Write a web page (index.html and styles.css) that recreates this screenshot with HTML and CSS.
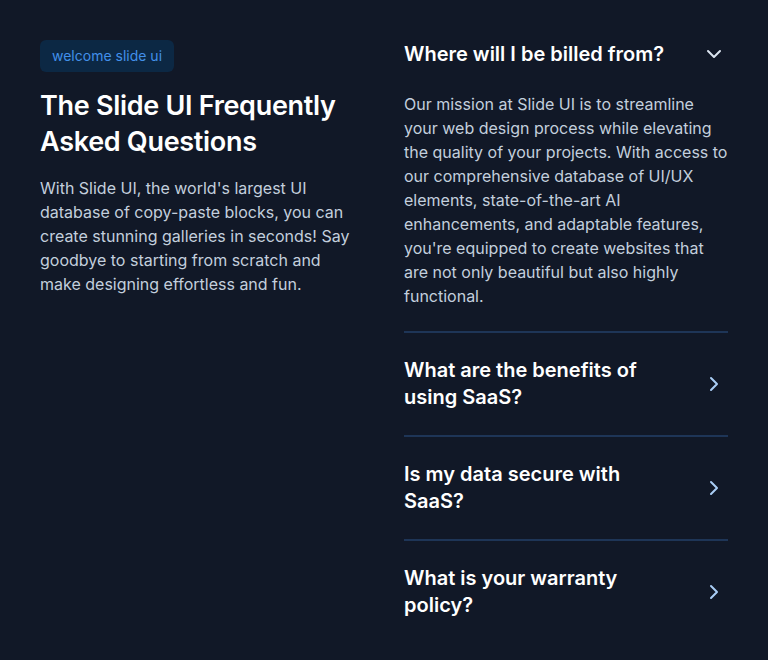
FILE: index.html
```html
<!DOCTYPE html>
<html lang="en">
<head>
<meta charset="utf-8">
<link rel="stylesheet" href="styles.css">
</head>
<body>
<section class="faq">
  <div class="intro">
    <span class="badge">welcome slide ui</span>
    <h1 class="title">The Slide UI Frequently Asked Questions</h1>
    <p class="lead">With Slide UI, the world's largest UI database of copy-paste blocks, you can create stunning galleries in seconds! Say goodbye to starting from scratch and make designing effortless and fun.</p>
  </div>
  <div class="list">
    <div class="item open">
      <div class="q">
        <span class="q-text">Where will I be billed from?</span>
        <svg class="icon icon-down" viewBox="0 0 24 24" width="24" height="24"><path d="M6 9l6 6 6-6" fill="none" stroke="currentColor" stroke-width="2" stroke-linecap="round" stroke-linejoin="round"/></svg>
      </div>
      <p class="a">Our mission at Slide UI is to streamline your web design process while elevating the quality of your projects. With access to our comprehensive database of UI/UX elements, state-of-the-art AI enhancements, and adaptable features, you're equipped to create websites that are not only beautiful but also highly functional.</p>
    </div>
    <div class="item">
      <div class="q">
        <span class="q-text">What are the benefits of using SaaS?</span>
        <svg class="icon icon-right" viewBox="0 0 24 24" width="24" height="24"><path d="M9 6l6 6-6 6" fill="none" stroke="currentColor" stroke-width="2" stroke-linecap="round" stroke-linejoin="round"/></svg>
      </div>
    </div>
    <div class="item">
      <div class="q">
        <span class="q-text">Is my data secure with SaaS?</span>
        <svg class="icon icon-right" viewBox="0 0 24 24" width="24" height="24"><path d="M9 6l6 6-6 6" fill="none" stroke="currentColor" stroke-width="2" stroke-linecap="round" stroke-linejoin="round"/></svg>
      </div>
    </div>
    <div class="item last">
      <div class="q">
        <span class="q-text">What is your warranty policy?</span>
        <svg class="icon icon-right" viewBox="0 0 24 24" width="24" height="24"><path d="M9 6l6 6-6 6" fill="none" stroke="currentColor" stroke-width="2" stroke-linecap="round" stroke-linejoin="round"/></svg>
      </div>
    </div>
  </div>
</section>
</body>
</html>
```

FILE: styles.css
```css
* { box-sizing: border-box; }
html, body { margin: 0; padding: 0; }
body {
  background: #111827;
  font-family: Inter, "Noto Sans", sans-serif;
  color: #cbd5e1;
  width: 768px;
  height: 660px;
  overflow: hidden;
}
.faq {
  display: grid;
  grid-template-columns: 1fr 1fr;
  gap: 40px;
  padding: 40px;
}
.intro { display: flex; flex-direction: column; align-items: flex-start; }
.badge {
  display: inline-block;
  height: 32px;
  line-height: 32px;
  padding: 0 12px;
  border-radius: 6px;
  background: #0c2844;
  color: #4290ea;
  font-size: 14px;
}
.title {
  margin: 16px 0 0;
  font-size: 27px;
  line-height: 36px;
  font-weight: 600;
  color: #ffffff;
  letter-spacing: -0.3px;
}
.lead {
  margin: 16px 0 0;
  font-size: 16px;
  line-height: 24px;
  color: #c3cfdd;
}
.list { display: flex; flex-direction: column; }
.item {
  padding: 24px 0;
  border-bottom: 2px solid #1e3557;
}
.item:first-child { padding-top: 0; padding-bottom: 23px; }
.item.last { border-bottom: none; }
.q {
  display: flex;
  align-items: center;
  justify-content: space-between;
  gap: 24px;
}
.q-text {
  font-size: 20px;
  line-height: 27px;
  font-weight: 600;
  color: #ffffff;
  max-width: 274px;
}
.item:first-child .q-text { line-height: 28px; }
.icon { flex: none; margin-right: 2px; }
.icon-down { color: #dbe4ef; }
.icon-right { color: #a9cdf5; }
.a {
  margin: 24px 0 0;
  font-size: 16px;
  line-height: 24px;
  color: #c3cfdd;
}
```
